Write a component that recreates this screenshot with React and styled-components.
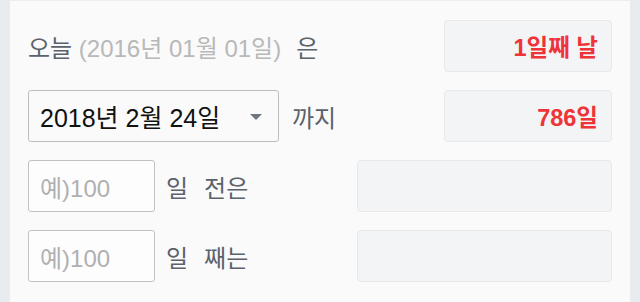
import React from "react";
import styled, { createGlobalStyle } from "styled-components";

const Global = createGlobalStyle`
  html, body { margin: 0; padding: 0; background: #e9ecef; }
  body { font-family: "Liberation Sans", "Noto Sans CJK KR", sans-serif; }
  * { box-sizing: border-box; }
`;

const Page = styled.div`
  display: flex;
  justify-content: center;
  width: 640px;
  height: 302px;
  padding: 0 10px;
  background: #e9ecef;
`;

const Panel = styled.div`
  flex: 1;
  background: #fafafa;
  border-top: 1px solid #eeeeee;
  padding: 19px 18px 0 18px;
  display: flex;
  flex-direction: column;
  gap: 18px;
`;

const Row = styled.div`
  display: flex;
  align-items: center;
  justify-content: space-between;
  height: 52px;
`;

const Left = styled.div`
  display: flex;
  align-items: center;
  gap: ${(p) => p.$gap || 0}px;
`;

const Label = styled.span`
  font-size: 24px;
  color: ${(p) => (p.$muted ? "#b8b8b8" : "#5a626c")};
  white-space: pre;
  margin-left: ${(p) => p.$ml || 0}px;
`;

const Select = styled.div`
  width: 251px;
  height: 52px;
  border: 1px solid #bdbdbd;
  border-radius: 3px;
  background: #fafafa;
  display: flex;
  align-items: center;
  justify-content: space-between;
  padding: 0 16px 0 11px;
  font-size: 25px;
  color: #111;
`;

const Arrow = styled.span`
  width: 0;
  height: 0;
  border-left: 6px solid transparent;
  border-right: 6px solid transparent;
  border-top: 6px solid #6f7680;
  margin-top: 2px;
`;

const Input = styled.div`
  width: 127px;
  height: 52px;
  border: 1px solid #c2c2c2;
  border-radius: 3px;
  background: #fdfdfd;
  display: flex;
  align-items: center;
  padding: 0 11px;
  font-size: 24px;
  color: #b0b0b0;
`;

const Result = styled.div`
  width: ${(p) => p.$w}px;
  height: 52px;
  background: #f3f4f6;
  border: 1px solid #e7e8ea;
  border-radius: 4px;
  display: flex;
  align-items: center;
  justify-content: flex-end;
  padding-right: 13px;
  font-size: 23.5px;
  font-weight: bold;
  color: #ee3438;
`;

export default function App() {
  return (
    <>
      <Global />
      <Page>
        <Panel>
          <Row>
            <Left>
              <Label>오늘 </Label>
              <Label $muted>(2016년 01월 01일)</Label>
              <Label $ml={15}>은</Label>
            </Left>
            <Result $w={168}>1일째 날</Result>
          </Row>
          <Row>
            <Left $gap={13}>
              <Select>
                <span>2018년 2월 24일</span>
                <Arrow />
              </Select>
              <Label>까지</Label>
            </Left>
            <Result $w={168}>786일</Result>
          </Row>
          <Row>
            <Left $gap={11}>
              <Input>예)100</Input>
              <Label>일</Label>
              <Label $ml={5}>전은</Label>
            </Left>
            <Result $w={255} />
          </Row>
          <Row>
            <Left $gap={11}>
              <Input>예)100</Input>
              <Label>일</Label>
              <Label $ml={5}>째는</Label>
            </Left>
            <Result $w={255} />
          </Row>
        </Panel>
      </Page>
    </>
  );
}
